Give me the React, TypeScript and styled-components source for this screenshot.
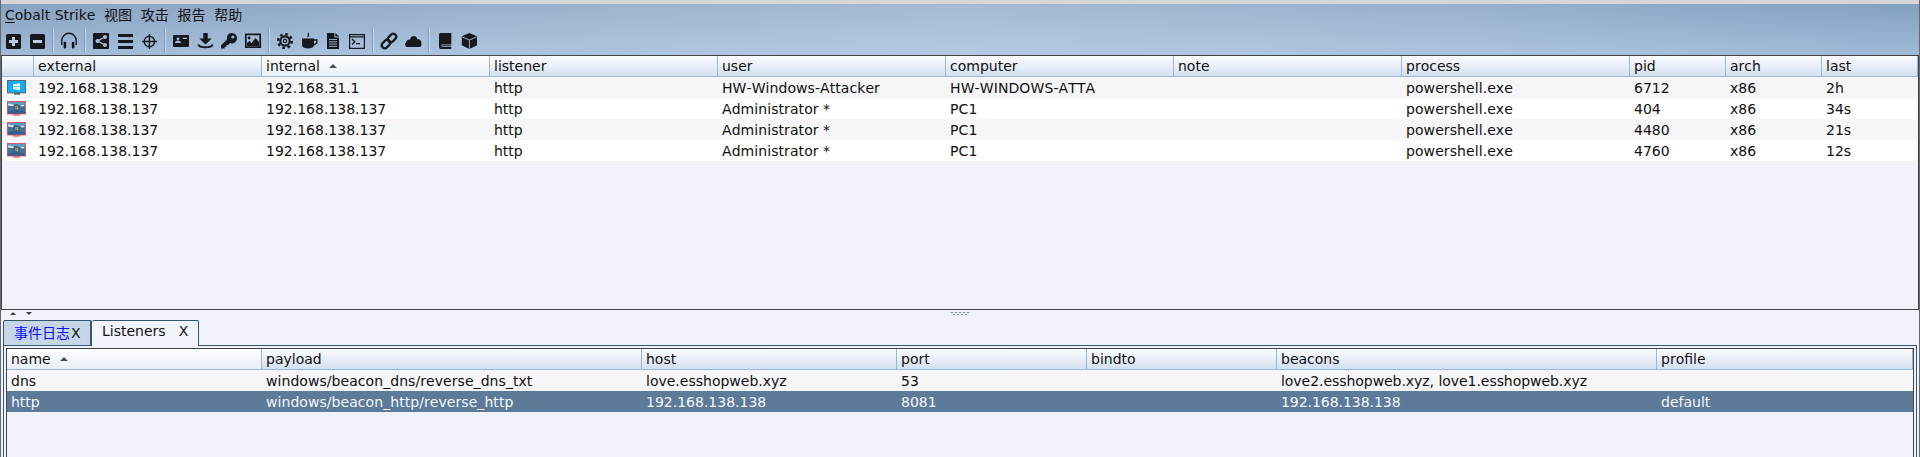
import React from "react";
import styled, { createGlobalStyle } from "styled-components";

const Global = createGlobalStyle`
  * { box-sizing: border-box; }
  body { margin: 0; background: #f0f3fb; }
`;

const Window = styled.div`
  width: 1920px;
  height: 457px;
  display: flex;
  flex-direction: column;
  overflow: hidden;
  background: #f0f3fb;
  border-left: 1px solid #67696c;
  border-right: 1px solid #67696c;
  font: 14px/21px "DejaVu Sans", "Noto Sans CJK SC", sans-serif;
  font-kerning: none;
  color: #101010;
  white-space: pre;
`;

const TitleEdge = styled.div`
  height: 4px;
  flex: none;
  background: #d6d6d6;
`;

const Chrome = styled.div`
  height: 51px;
  flex: none;
  background:
    linear-gradient(to bottom, rgba(205, 228, 252, 0), rgba(205, 228, 252, 0.38)),
    linear-gradient(to right, #87a1c1 0%, #98b0cc 24%, #a6b9d3 50%, #98b0cd 76%, #82a0c0 100%);
`;

const MenuBar = styled.nav`
  height: 22px;
  display: flex;
  gap: 8.7px;
  padding-left: 4px;
`;

const MenuItem = styled.span`
  line-height: 22px;
  u { text-underline-offset: 2px; }
`;

const ToolBar = styled.div`
  height: 29px;
  display: flex;
  align-items: flex-start;
  padding-top: 3px;
`;

const ToolButton = styled.span`
  width: 24px;
  height: 24px;
  padding: 4px;
  svg { display: block; }
`;

const Divider = styled.i`
  width: 2px;
  height: 24px;
  margin: 0 3px;
  background: linear-gradient(to right, #7f9cbc 50%, #c3d6ea 50%);
`;

const Table = styled.section<{ $inset?: boolean }>`
  display: flex;
  flex-direction: column;
  flex: ${(p) => (p.$inset ? "1" : "none")};
  height: ${(p) => (p.$inset ? "auto" : "255px")};
  border: 1px solid #404347;
  border-bottom-width: ${(p) => (p.$inset ? 0 : 1)}px;
`;

const Head = styled.div<{ $cols: string }>`
  display: grid;
  grid-template-columns: ${(p) => p.$cols};
  height: 21px;
  flex: none;
  border-bottom: 1px solid #98b8d6;
  background: linear-gradient(#fbfdff, #e9eff8 50%, #d3e0ee);
`;

const HeadCell = styled.div<{ $sorted?: boolean }>`
  padding-left: 4px;
  line-height: 20px;
  border-right: 1px solid #98b8d6;
  background: ${(p) => (p.$sorted ? "linear-gradient(#ffffff, #e8eef8)" : "none")};
  svg { margin-left: 9px; vertical-align: 3px; }
`;

const Row = styled.div<{ $cols: string; $tone: "odd" | "even" | "selected" }>`
  display: grid;
  grid-template-columns: ${(p) => p.$cols};
  height: 21px;
  flex: none;
  color: ${(p) => (p.$tone === "selected" ? "#f4f7fb" : "#101010")};
  background: ${(p) => ({ odd: "#f6f6f9", even: "#ffffff", selected: "#5d7a99" })[p.$tone]};
`;

const Cell = styled.div<{ $tracking?: number }>`
  padding-left: 4px;
  line-height: 22px;
  letter-spacing: ${(p) => p.$tracking ?? 0}px;
  overflow: hidden;
`;

const IconCell = styled.div`
  padding: 3px 0 0 5px;
  svg { display: block; }
`;

const SplitBar = styled.div`
  height: 10px;
  flex: none;
  display: grid;
  grid-template-columns: 950px 1fr;
  svg { display: block; }
`;

const TabStrip = styled.div`
  display: flex;
  height: 26px;
  flex: none;
  padding-left: 2px;
`;

const Tab = styled.div<{ $active?: boolean; $w: number }>`
  width: ${(p) => p.$w}px;
  display: flex;
  line-height: ${(p) => (p.$active ? 20 : 24)}px;
  padding-left: 10px;
  border: 1px solid #34556f;
  border-right-width: ${(p) => (p.$active ? 1 : 2)}px;
  border-bottom-width: ${(p) => (p.$active ? 0 : 1)}px;
  border-left-width: ${(p) => (p.$active ? 0 : 1)}px;
  border-radius: 2px 2px 0 0;
  background: ${(p) => (p.$active ? "#f1f4fb" : "#c8d7e8")};
`;

const TabTitle = styled.span<{ $alert?: boolean }>`
  color: ${(p) => (p.$alert ? "#0808ff" : "#101010")};
`;

const TabClose = styled.span<{ $gap: number }>`
  margin-left: ${(p) => p.$gap}px;
`;

const TabRule = styled.div`
  flex: 1;
  margin-right: 2px;
  border-bottom: 1px solid #34556f;
`;

const TabPane = styled.div`
  flex: 1;
  display: flex;
  flex-direction: column;
  margin: 0 2px;
  padding: 2px 2px 0;
  border: solid #34556f;
  border-width: 0 1px;
`;

const ink = "#15191e";

const icons: Record<string, React.ReactNode> = {
  plus: <g transform="translate(1 1)"><rect width="15" height="15" rx="1.6" fill={ink} /><path d="M7.5 3v9M3 7.5h9" stroke="#b9cbe0" strokeWidth="3" /></g>,
  minus: <g transform="translate(1 1)"><rect width="15" height="15" rx="1.6" fill={ink} /><path d="M3 7.5h9" stroke="#b9cbe0" strokeWidth="3" /></g>,
  headphones: <><path d="M.8 12V7.5a7.2 7.2 0 0 1 14.4 0V12" fill="none" stroke={ink} strokeWidth="1.4" /><rect x="2.6" y="8.8" width="2.6" height="6.8" rx="1" fill={ink} /><rect x="10.8" y="8.8" width="2.6" height="6.8" rx="1" fill={ink} /></>,
  share: <><rect width="16" height="16" rx=".8" fill={ink} /><path d="M12 4 4.5 8 12 12" fill="none" stroke="#a8bdd6" strokeWidth="1.3" /><circle cx="12" cy="4" r="2" fill="#a8bdd6" /><circle cx="4.5" cy="8" r="2" fill="#a8bdd6" /><circle cx="12" cy="12" r="2" fill="#a8bdd6" /></>,
  list: <path d="M1 2.5h15M1 8.5h15M1 14.5h15" stroke={ink} strokeWidth="3" />,
  target: <g fill="none" stroke={ink} strokeWidth="1.4"><circle cx="8.4" cy="8.5" r="5.2" /><path d="M8.4 1v15M1 8.5h15" /></g>,
  card: <><rect y="2" width="16" height="12" rx="1" fill={ink} /><circle cx="5" cy="5.8" r="1.4" fill="#a8bdd6" /><path d="M2 10c0-3.5 6-3.5 6 0zM10 4.8h4V6h-4z" fill="#a8bdd6" /></>,
  download: <><path d="M6.3 0h4.4v5.5h4L8.5 11.5 2.3 5.5h4z" fill={ink} /><path d="M1.4 11.5c1 3.8 13.2 3.8 14.2 0" fill="none" stroke={ink} strokeWidth="2" /></>,
  key: <path fillRule="evenodd" d="M10.8 0a5.2 5.2 0 1 1-1.7 10.1L7.2 12H5.4v1.8H3.6v1.7H0v-3L5.9 6.6A5.2 5.2 0 0 1 10.8 0zm1 2.4a1.6 1.6 0 1 0 .1 3.2 1.6 1.6 0 0 0-.1-3.2z" fill={ink} />,
  image: <><path d="M.8 1.3h14.4v12.9H.8z" fill="none" stroke={ink} strokeWidth="1.7" /><circle cx="4.1" cy="5" r="1.4" fill={ink} /><path d="m2 13 0-3 2.5-2 2 2 4-5L14 9v4z" fill={ink} /></>,
  gear: <g fill="none" stroke={ink}><circle cx="8" cy="8" r="6.9" strokeWidth="2.4" strokeDasharray="2.71 2.709" /><circle cx="8" cy="8" r="4.7" strokeWidth="2.2" /><circle cx="8" cy="8" r="1.7" strokeWidth="1.2" /></g>,
  cup: <g transform="translate(1 0)"><path d="M0 5.5h12v6.8c0 4.2-12 4.2-12 0z" fill={ink} /><path d="M11.5 7h3.3v3l-3.3 2M5.5 4c3-2-1-2 1.5-4" fill="none" stroke={ink} strokeWidth="1.4" /></g>,
  file: <><path d="M2 0h7.4v4.6h4.6V16H2zM10.4 0l3.6 3.6h-3.6z" fill={ink} /><path d="M4 6.5h8M4 8.8h8M4 11.1h8M4 13.4h8" stroke="#a8bdd6" strokeWidth=".9" /></>,
  terminal: <><path d="M.6 1.6h14.8v13.8H.6zM.6 3.8h14.8" fill="none" stroke={ink} strokeWidth="1.2" /><path d="m3 6 2.8 2.7L3 11.4M7 10.6h4" fill="none" stroke={ink} strokeWidth="1.4" /></>,
  link: <g transform="rotate(-45 8 8)" fill="none" stroke={ink} strokeWidth="2.2"><rect x="-1" y="5" width="9.5" height="6" rx="3" /><rect x="7.5" y="5" width="9.5" height="6" rx="3" /></g>,
  cloud: <path d="M2.4 14A2.6 2.6 0 0 1 1.2 9.3C1.5 7.2 3.4 6.3 5 6.5 6 1.8 11.4 2 12.4 6.2c2.4 0 4.4 1.3 4 4.5a3 3 0 0 1-1.2 3.3H2.4C-.4 14-.4 10 1.2 9.3z" fill={ink} />,
  book: <><path d="M3.5 0h10.8v11.5H4.5v2.6h9.8V16H3.5A2 2 0 0 1 2 14V1.5A1.5 1.5 0 0 1 3.5 0z" fill={ink} /><path d="M4.5 12.8h9.5" stroke={ink} /></>,
  cube: <><path d="M8.4 0 16 3.2v9L8.4 16 .8 12.2v-9z" fill={ink} /><path d="M1.2 3.8 8.4 7l7.2-3.2M8.4 7v8.8" fill="none" stroke="#a8bdd6" strokeWidth=".9" /></>,
};

const toolGroups = [
  ["plus", "minus"],
  ["headphones"],
  ["share", "list", "target"],
  ["card", "download", "key", "image"],
  ["gear", "cup", "file", "terminal"],
  ["link", "cloud"],
  ["book", "cube"],
];

const SortArrow = () => (
  <svg width="8" height="4"><path d="M4 0 8 4H0z" fill="#4c5055" /></svg>
);

const Windows10Host = () => (
  <svg width="20" height="16">
    <path d="M7 13h6v1.6H7z" fill="#555" />
    <rect x=".5" y=".5" width="18" height="12.4" fill="#12b0ee" stroke="#5a6a70" />
    <path d="M6 4.2 8.8 3.8v2.6H6zM9.3 3.7l3.5-.5v3.2H9.3zM6 6.9h2.8v2.6L6 9.1zM9.3 6.9h3.5v3.3l-3.5-.5z" fill="#fff" />
  </svg>
);

const Windows7Host = () => (
  <svg width="20" height="16">
    <path d="M5.5 13h8v1l-2 1h-4l-2-1z" fill="#ee8a95" />
    <rect x=".5" y=".5" width="18" height="12.4" fill="#3a73a3" stroke="#e2515f" />
    <path d="M1 1h17v2.5L13 4 6 3 1 4z" fill="#5f9cc4" />
    <path d="M1 2.5l5 .8 2 1.2-3 .8L1 4.5zM13 4.4l3-.8 2 1.4-3 .6z" fill="#d3e6f0" />
    <path d="M1 11c4-2.5 12-2.5 17 0v1.4H1z" fill="#2f5d8c" />
    <circle cx="9.5" cy="6.4" r="3.1" fill="#445e70" />
    <path d="M8.1 4.9h1.4v1.4H8.1z" fill="#cf7f5c" /><path d="M9.7 4.9h1.4v1.4H9.7z" fill="#a3b86c" />
    <path d="M8.1 6.6h1.4v1.3H8.1z" fill="#7fa9c6" /><path d="M9.7 6.6h1.5v1.7H9.7z" fill="#ecb04a" />
  </svg>
);

const sessionCols = "32px repeat(7, 228px) repeat(3, 96px)";
const sessionHeads = ["", "external", "internal", "listener", "user", "computer", "note", "process", "pid", "arch", "last"];
const sessions = [
  ["192.168.138.129", "192.168.31.1", "http", "HW-Windows-Attacker", "HW-WINDOWS-ATTA", "", "powershell.exe", "6712", "x86", "2h"],
  ["192.168.138.137", "192.168.138.137", "http", "Administrator *", "PC1", "", "powershell.exe", "404", "x86", "34s"],
  ["192.168.138.137", "192.168.138.137", "http", "Administrator *", "PC1", "", "powershell.exe", "4480", "x86", "21s"],
  ["192.168.138.137", "192.168.138.137", "http", "Administrator *", "PC1", "", "powershell.exe", "4760", "x86", "12s"],
];
const sessionTracking = [0, 0, 0, 0.07, 0.1, 0, 0.08];

const listenerCols = "255px 380px 255px 190px 190px 380px 256px";
const listenerHeads = ["name", "payload", "host", "port", "bindto", "beacons", "profile"];
const listeners = [
  ["dns", "windows/beacon_dns/reverse_dns_txt", "love.esshopweb.xyz", "53", "", "love2.esshopweb.xyz, love1.esshopweb.xyz", ""],
  ["http", "windows/beacon_http/reverse_http", "192.168.138.138", "8081", "", "192.168.138.138", "default"],
];
const listenerTracking = [0, 0.06, 0, 0, 0, -0.05, 0];

export default function App() {
  return (
    <Window>
      <Global />
      <TitleEdge />
      <Chrome>
        <MenuBar>
          <MenuItem><u>C</u>obalt Strike</MenuItem>
          <MenuItem>视图</MenuItem>
          <MenuItem>攻击</MenuItem>
          <MenuItem>报告</MenuItem>
          <MenuItem>帮助</MenuItem>
        </MenuBar>
        <ToolBar>
          {toolGroups.map((group, g) => (
            <React.Fragment key={g}>
              {g > 0 && <Divider />}
              {group.map((name) => (
                <ToolButton key={name}><svg width="16" height="16" overflow="visible">{icons[name]}</svg></ToolButton>
              ))}
            </React.Fragment>
          ))}
        </ToolBar>
      </Chrome>
      <Table>
        <Head $cols={sessionCols}>
          {sessionHeads.map((h) => (
            <HeadCell key={h} $sorted={h === "internal"}>{h}{h === "internal" && <SortArrow />}</HeadCell>
          ))}
        </Head>
        {sessions.map((cells, r) => (
          <Row key={r} $cols={sessionCols} $tone={r % 2 ? "even" : "odd"}>
            <IconCell>{r === 0 ? <Windows10Host /> : <Windows7Host />}</IconCell>
            {cells.map((c, i) => <Cell key={i} $tracking={sessionTracking[i]}>{c}</Cell>)}
          </Row>
        ))}
      </Table>
      <SplitBar>
        <svg width="40" height="10"><path d="M9 5h6L12 2zM25 2h6l-3 3z" fill="#3c4046" /></svg>
        <svg width="20" height="6">
          <g fill="#6d8299">
            {[0, 4, 8, 12, 16].map((x) => <rect key={x} x={x} y="2" width="2" height="1" />)}
            {[2, 6, 10, 14].map((x) => <rect key={x} x={x} y="4" width="2" height="1" />)}
          </g>
        </svg>
      </SplitBar>
      <TabStrip>
        <Tab $w={89}><TabTitle $alert>事件日志</TabTitle><TabClose $gap={1}>X</TabClose></Tab>
        <Tab $w={107} $active><TabTitle>Listeners</TabTitle><TabClose $gap={13}>X</TabClose></Tab>
        <TabRule />
      </TabStrip>
      <TabPane>
        <Table $inset>
          <Head $cols={listenerCols}>
            {listenerHeads.map((h) => (
              <HeadCell key={h} $sorted={h === "name"}>{h}{h === "name" && <SortArrow />}</HeadCell>
            ))}
          </Head>
          {listeners.map((cells, r) => (
            <Row key={r} $cols={listenerCols} $tone={r ? "selected" : "odd"}>
              {cells.map((c, i) => <Cell key={i} $tracking={listenerTracking[i]}>{c}</Cell>)}
            </Row>
          ))}
        </Table>
      </TabPane>
    </Window>
  );
}
